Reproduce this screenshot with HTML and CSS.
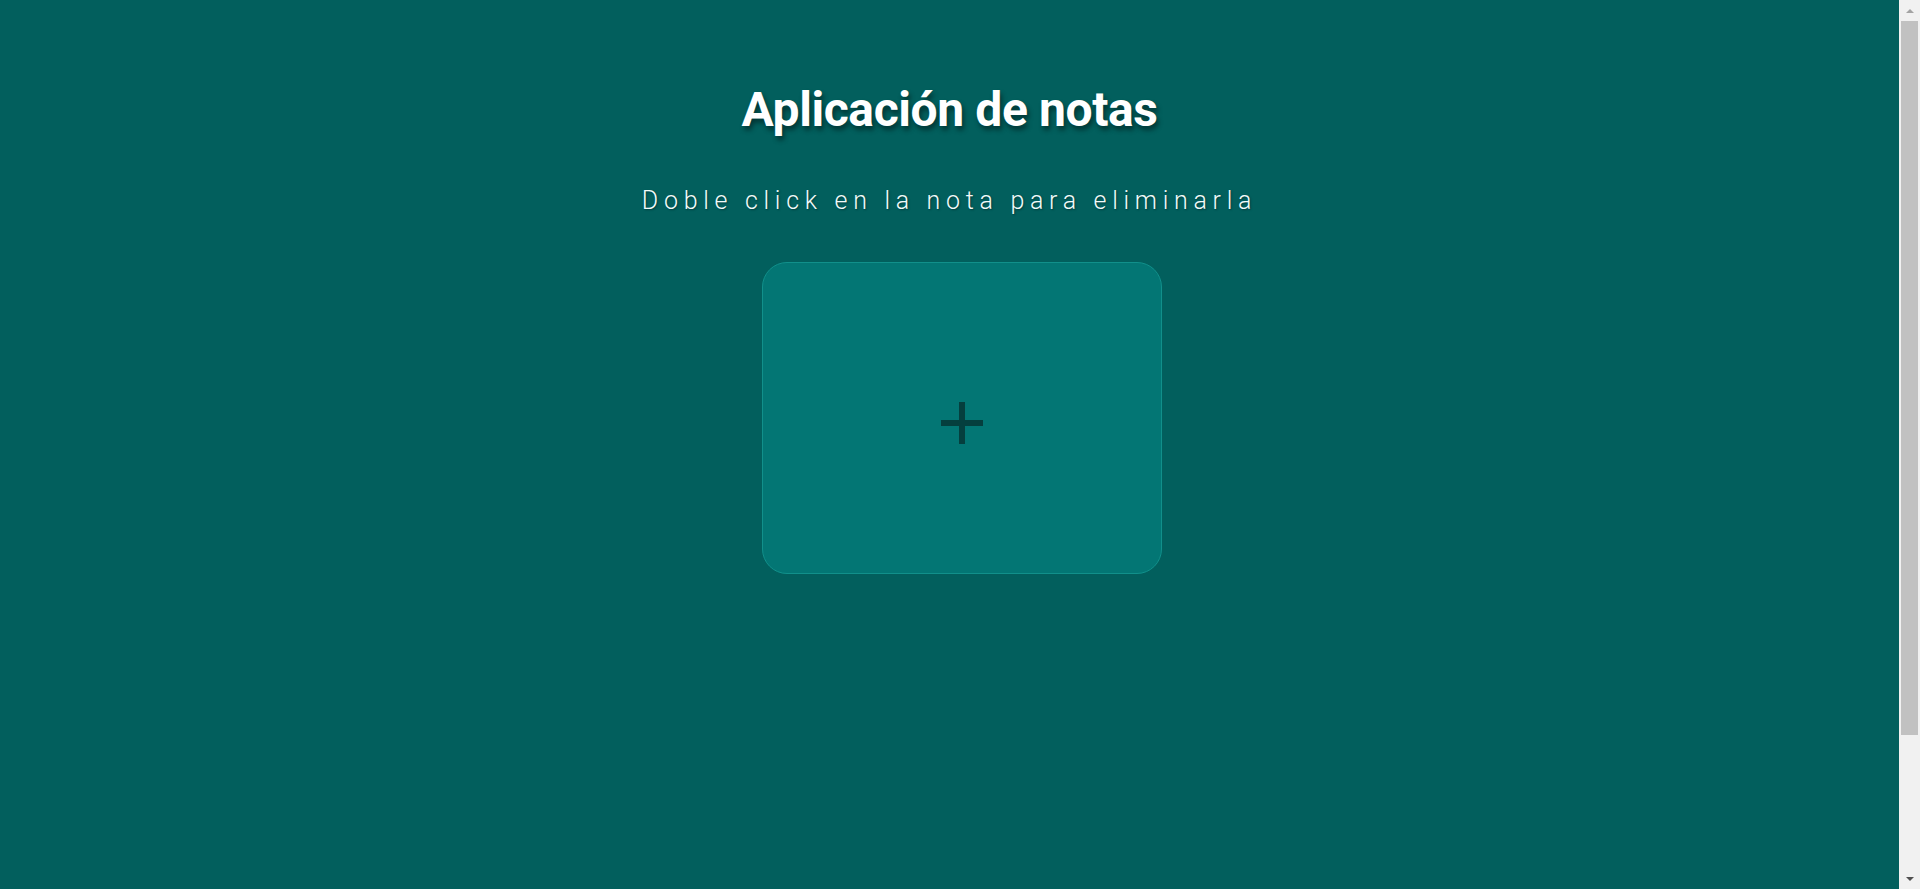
FILE: index.html
```html
<!DOCTYPE html>
<html lang="es">
<head>
<meta charset="utf-8">
<title>Aplicación de notas</title>
<link rel="stylesheet" href="styles.css">
</head>
<body>
<div class="page">
  <main class="app">
    <h1 class="app-title">Aplicación de notas</h1>
    <p class="app-subtitle">Doble click en la nota para eliminarla</p>
    <section class="notes">
      <button class="add-note" type="button" aria-label="Agregar nota">
        <svg class="add-icon" width="42" height="42" viewBox="0 0 42 42" aria-hidden="true">
          <path d="M21 0V42M0 21H42" stroke="#053f3e" stroke-width="6" fill="none"/>
        </svg>
      </button>
    </section>
  </main>
  <div class="scrollbar" aria-hidden="true">
    <div class="sb-btn"><span class="sb-arrow-up"></span></div>
    <div class="sb-track"><div class="sb-thumb"></div></div>
    <div class="sb-btn"><span class="sb-arrow-down"></span></div>
  </div>
</div>
</body>
</html>
```

FILE: styles.css
```css
html, body {
  margin: 0;
  padding: 0;
}

body {
  background: #025f5d;
  font-family: Roboto, "Noto Sans", sans-serif;
  color: #ffffff;
  overflow: hidden;
}

.page {
  display: flex;
  height: 889px;
}

.app {
  flex: 1;
  box-sizing: border-box;
  padding-top: 86px;
  display: flex;
  flex-direction: column;
  align-items: center;
}

.app-title {
  margin: 0;
  font-size: 48px;
  line-height: 1;
  font-weight: 700;
  letter-spacing: -0.4px;
  text-shadow: 2px 4px 5px rgba(0, 0, 0, 0.45);
}

.app-subtitle {
  margin: 54px 0 0;
  font-size: 25px;
  line-height: 1;
  font-weight: 300;
  letter-spacing: 5.7px;
  color: #f2fbfa;
  text-shadow: 1px 1px 2px rgba(0, 0, 0, 0.35);
}

.notes {
  margin-top: 49px;
  padding-left: 25px;
  display: flex;
  justify-content: center;
}

.add-note {
  width: 400px;
  height: 312px;
  box-sizing: border-box;
  border: 1px solid #11908b;
  border-radius: 25px;
  background: #037674;
  display: flex;
  align-items: center;
  justify-content: center;
  padding: 10px 0 0;
  cursor: pointer;
}

.add-icon {
  display: block;
}

/* fake browser scrollbar */
.scrollbar {
  width: 21px;
  flex-shrink: 0;
  background: #f1f1f1;
  display: flex;
  flex-direction: column;
}

.sb-btn {
  height: 21px;
  display: flex;
  align-items: center;
  justify-content: center;
}

.sb-arrow-up {
  width: 0;
  height: 0;
  border-left: 4.5px solid transparent;
  border-right: 4.5px solid transparent;
  border-bottom: 4.5px solid #a3a3a3;
}

.sb-arrow-down {
  width: 0;
  height: 0;
  border-left: 4.5px solid transparent;
  border-right: 4.5px solid transparent;
  border-top: 4.5px solid #505050;
}

.sb-track {
  flex: 1;
  padding: 0 2px;
}

.sb-thumb {
  height: 714px;
  background: #c1c1c1;
}
```
